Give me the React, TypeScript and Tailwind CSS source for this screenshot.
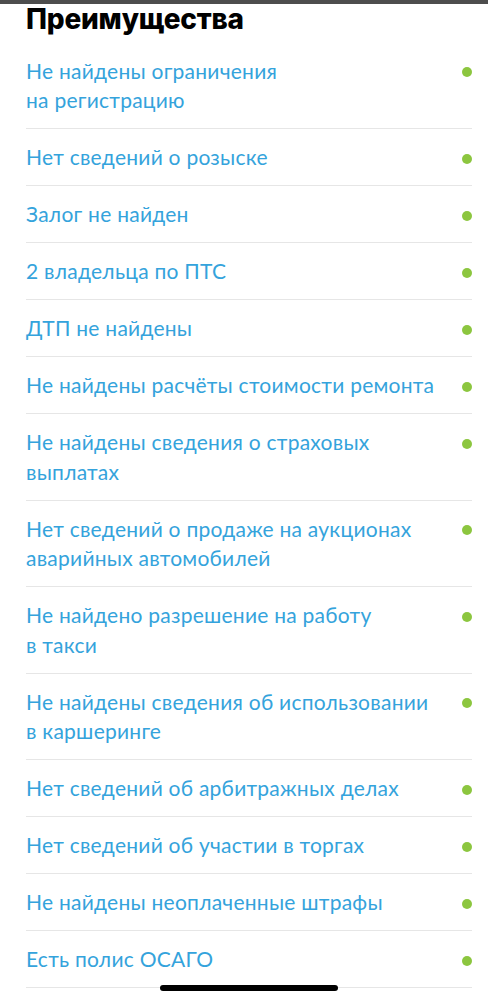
const items: string[][] = [
  ["Не найдены ограничения", "на регистрацию"],
  ["Нет сведений о розыске"],
  ["Залог не найден"],
  ["2 владельца по ПТС"],
  ["ДТП не найдены"],
  ["Не найдены расчёты стоимости ремонта"],
  ["Не найдены сведения о страховых", "выплатах"],
  ["Нет сведений о продаже на аукционах", "аварийных автомобилей"],
  ["Не найдено разрешение на работу", "в такси"],
  ["Не найдены сведения об использовании", "в каршеринге"],
  ["Нет сведений об арбитражных делах"],
  ["Нет сведений об участии в торгах"],
  ["Не найдены неоплаченные штрафы"],
  ["Есть полис ОСАГО"],
];

export default function App() {
  return (
    <div className="relative w-[488px] h-[1000px] overflow-hidden bg-white">
      <div className="h-[4px] bg-[#4d4d4d]" />
      <div className="pl-[26px] pr-[16px]">
        <h1 className="h-[38.5px] text-[28px] leading-[30px] font-extrabold text-black font-['Inter',sans-serif] tracking-[-0.2px]">
          Преимущества
        </h1>
        <ul>
          {items.map((lines, i) => (
            <li
              key={i}
              className="flex items-start justify-between py-[13.25px] border-b border-[#e6e6e6]"
            >
              <div className="text-[21px] leading-[29.5px] tracking-[0.25px] text-[#34a3dc] font-['Lato',sans-serif]">
                {lines.map((l, j) => (
                  <div key={j}>{l}</div>
                ))}
              </div>
              <span className="mt-[11.25px] w-[10px] h-[10px] rounded-full bg-[#8cc63f] shrink-0" />
            </li>
          ))}
        </ul>
      </div>
      <div className="absolute left-[160px] top-[985px] w-[178px] h-[6px] rounded-full bg-black" />
    </div>
  );
}
